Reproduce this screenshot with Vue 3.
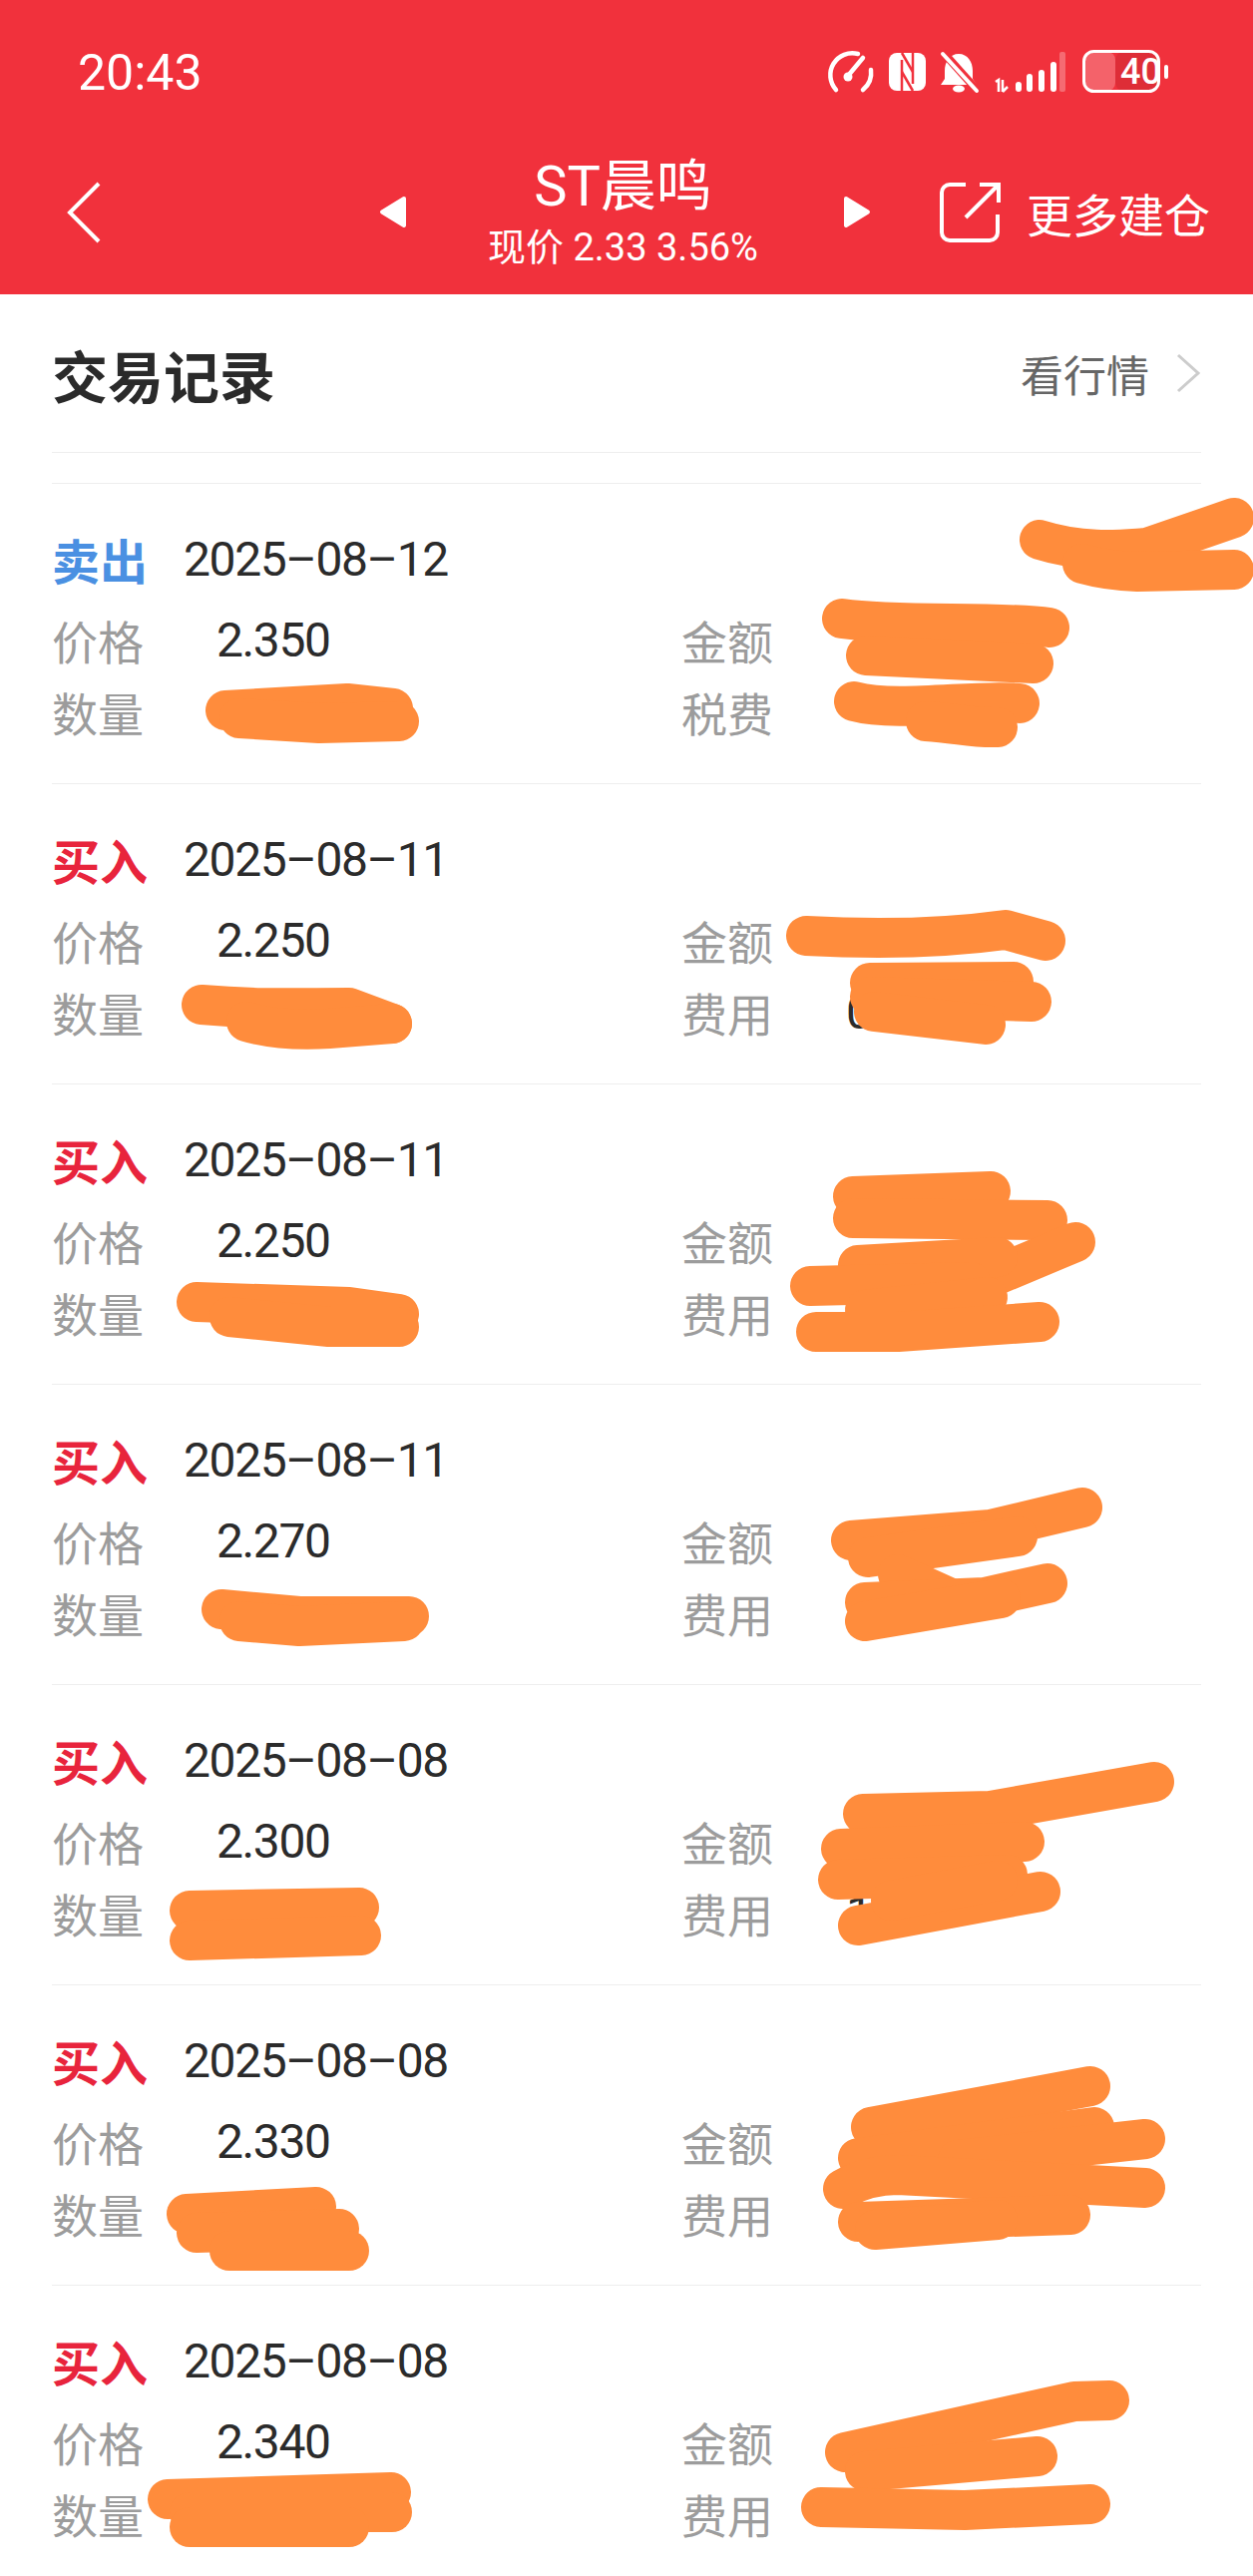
<script setup>
const rows = [
  { side: "sell", tag: "卖出", date: "2025–08–12", price: "2.350", feeLabel: "税费", fee: "" },
  { side: "buy", tag: "买入", date: "2025–08–11", price: "2.250", feeLabel: "费用", fee: "0" },
  { side: "buy", tag: "买入", date: "2025–08–11", price: "2.250", feeLabel: "费用", fee: "1" },
  { side: "buy", tag: "买入", date: "2025–08–11", price: "2.270", feeLabel: "费用", fee: "" },
  { side: "buy", tag: "买入", date: "2025–08–08", price: "2.300", feeLabel: "费用", fee: "1" },
  { side: "buy", tag: "买入", date: "2025–08–08", price: "2.330", feeLabel: "费用", fee: "" },
  { side: "buy", tag: "买入", date: "2025–08–08", price: "2.340", feeLabel: "费用", fee: "" },
];

// hand-drawn orange marker strokes, page coordinates
const scribbles = [
  "M1042 541C1090 556 1130 550 1150 549L1237 519",
  "M1085 565Q1110 572 1140 573L1237 571",
  "M844 620C900 628 1000 622 1052 629",
  "M868 657L1036 665",
  "M856 703C900 715 980 700 1022 705",
  "M928 723C960 725 975 730 1000 729",
  "M202 1007C260 1012 300 1010 350 1010L393 1026",
  "M247 1024Q280 1034 330 1031L393 1026",
  "M226 712L348 705L394 710",
  "M240 720L320 725L400 723",
  "M808 938C880 942 950 940 1008 932L1048 943",
  "M872 985L1016 984",
  "M872 999L1034 1004",
  "M876 1014L988 1027",
  "M855 1199L993 1194",
  "M855 1221L1050 1223",
  "M1078 1245L973 1289",
  "M860 1268L1000 1260",
  "M812 1289L973 1285",
  "M867 1313L990 1300",
  "M818 1335L900 1335L1042 1325",
  "M197 1305L350 1310L400 1317",
  "M230 1320L330 1330L400 1330",
  "M853 1544L993 1533L1085 1511",
  "M870 1561L1020 1540",
  "M900 1578L953 1602",
  "M867 1606L987 1601L1050 1587",
  "M867 1625L1003 1602",
  "M222 1613L300 1620L410 1620",
  "M240 1625L300 1630L405 1625",
  "M865 1818L993 1815L1157 1786",
  "M843 1853L1027 1846",
  "M840 1884L1010 1879",
  "M860 1930L1043 1896",
  "M893 1905L1000 1885",
  "M190 1915L360 1912",
  "M190 1945L362 1940",
  "M873 2132L1093 2091",
  "M860 2163L1097 2132",
  "M960 2165L1148 2144",
  "M845 2194Q870 2180 900 2180L1148 2193",
  "M860 2227L1073 2220",
  "M877 2235L1000 2225",
  "M187 2219L317 2212",
  "M197 2238L340 2234",
  "M230 2256L350 2256",
  "M847 2458L1077 2407L1112 2406",
  "M867 2477L1040 2462",
  "M823 2513L967 2516L1093 2510",
  "M168 2505L392 2498",
  "M190 2518L393 2518",
  "M190 2533L350 2533",
];
</script>

<template>
  <div class="page">
    <header class="top">
      <div class="status">
        <span class="time">20:43</span>
        <svg class="status-icons" width="350" height="50" viewBox="825 48 350 50">
          <g fill="none" stroke="#fff" stroke-width="4.5" stroke-linecap="round">
            <path d="M838 90A22 22 0 0 1 860 54" />
            <path d="M873 70A22 22 0 0 1 865 90" />
            <path d="M850 76L865 58" />
          </g>
          <circle cx="850" cy="77" r="4.5" fill="#fff" />

          <rect x="891" y="53" width="37" height="38" rx="8" fill="#fff" />
          <g fill="none" stroke="#f1313c" stroke-width="2.5">
            <path d="M904 60V91" />
            <path d="M915 53V84" />
            <path d="M904 53L915 72" />
            <path d="M904 72L915 91" />
          </g>

          <path d="M961 54c-9 0-14 8-14 17v8l-4 6h36l-4-6v-8c0-9-5-17-14-17z" fill="#fff" />
          <ellipse cx="961" cy="89" rx="6" ry="3.5" fill="#fff" />
          <path d="M945 52L979 90" stroke="#f1313c" stroke-width="8" />
          <path d="M945 54L979 91" stroke="#fff" stroke-width="4" stroke-linecap="round" />

          <g fill="none" stroke="#fff" stroke-width="2.5">
            <path d="M998 82L1001 80V92" />
            <path d="M1005 80V92M1005 92L1010 87" />
          </g>
          <rect x="1018" y="82" width="6" height="10" rx="3" fill="#fff" />
          <rect x="1029" y="74" width="6" height="18" rx="3" fill="#fff" />
          <rect x="1041" y="70" width="6" height="22" rx="3" fill="#fff" />
          <rect x="1053" y="62" width="6" height="30" rx="3" fill="#fff" />
          <rect x="1062" y="52" width="6" height="40" rx="2" fill="#fff" opacity="0.28" />

          <rect x="1087" y="52" width="31" height="39" rx="8" fill="#fff" opacity="0.24" />
          <rect x="1118" y="52" width="43" height="39" rx="8" fill="#000" opacity="0.08" />
          <rect x="1086.5" y="51.5" width="75" height="40" rx="10" fill="none" stroke="#fff" stroke-width="3" />
          <text x="1123" y="84" class="batt">40</text>
          <rect x="1167" y="65" width="4" height="14" rx="2" fill="#fff" />
        </svg>
      </div>

      <div class="nav">
        <svg class="back" width="36" height="64" viewBox="66 181 36 64">
          <path d="M99 184L70 213L99 242" fill="none" stroke="#fff" stroke-width="4" />
        </svg>
        <svg class="arrow prev" width="27" height="33" viewBox="0 0 27 33">
          <path d="M25 3L3 16.500L25 30Z" fill="#fff" stroke="#fff" stroke-width="4" stroke-linejoin="round" />
        </svg>
        <div class="stock">
          <div class="stock-name">ST晨鸣</div>
          <div class="stock-sub">现价 2.33 3.56%</div>
        </div>
        <svg class="arrow" width="27" height="33" viewBox="0 0 27 33">
          <path d="M2 3L24 16.500L2 30Z" fill="#fff" stroke="#fff" stroke-width="4" stroke-linejoin="round" />
        </svg>
        <svg class="share" width="62" height="62" viewBox="941 182 62 62" fill="none" stroke="#fff" stroke-width="4">
          <path d="M968 185H952a8 8 0 0 0-8 8V233a8 8 0 0 0 8 8H992a8 8 0 0 0 8-8V215" />
          <path d="M968 218L1000 186" />
          <path d="M982 185H1001V203" />
        </svg>
        <span class="more">更多建仓</span>
      </div>
    </header>

    <section class="title-row">
      <h2>交易记录</h2>
      <div class="quote">
        <span>看行情</span>
        <svg width="26" height="40" viewBox="0 0 26 40">
          <path d="M3 2L23 20L3 38" fill="none" stroke="#ccc" stroke-width="3" />
        </svg>
      </div>
    </section>

    <ul class="list">
      <li v-for="(row, i) in rows" :key="i" class="row">
        <div class="row-head">
          <span class="tag" :class="row.side">{{ row.tag }}</span>
          <span class="date">{{ row.date }}</span>
        </div>
        <div class="fields">
          <div class="field"><label>价格</label><b>{{ row.price }}</b></div>
          <div class="field"><label>金额</label><b></b></div>
          <div class="field"><label>数量</label><b></b></div>
          <div class="field"><label>{{ row.feeLabel }}</label><b>{{ row.fee }}</b></div>
        </div>
      </li>
    </ul>

    <svg class="marker" width="1256" height="2582" viewBox="0 0 1256 2582">
      <path v-for="(d, i) in scribbles" :key="i" :d="d" />
    </svg>
  </div>
</template>

<style>
body {
  margin: 0;
  background: #fff;
}
</style>

<style scoped>
.page {
  position: relative;
  width: 1256px;
  height: 2582px;
  overflow: hidden;
  background: #fff;
  font-family: Roboto, "Noto Sans CJK SC", sans-serif;
}

.top {
  height: 295px;
  background: #f1313c;
  color: #fff;
}

.status {
  height: 130px;
  display: flex;
  align-items: flex-start;
  padding-top: 48px;
  box-sizing: border-box;
}

.time {
  margin-left: 78px;
  font-size: 50px;
  line-height: 50px;
}

.status-icons {
  display: block;
  margin-left: auto;
  margin-right: 81px;
}

.batt {
  fill: #fff;
  font-size: 36px;
  font-weight: 500;
  font-family: Roboto, sans-serif;
}

.nav {
  height: 165px;
  display: flex;
  align-items: center;
}

.back {
  margin-left: 66px;
}

.prev {
  margin-left: 278px;
}

.stock {
  width: 439px;
  padding-right: 4px;
  box-sizing: border-box;
  text-align: center;
}

.stock-name {
  font-size: 56px;
  line-height: 64px;
}

.stock-sub {
  font-size: 38px;
  line-height: 44px;
  margin-top: 7px;
}

.share {
  margin-left: 68px;
}

.more {
  margin-left: 26px;
  font-size: 46px;
  white-space: nowrap;
}

.title-row {
  height: 159px;
  margin: 0 52px;
  border-bottom: 1px solid #eee;
  display: flex;
  align-items: center;
  justify-content: space-between;
  box-sizing: border-box;
}

h2 {
  margin: 0;
  font-size: 56px;
  font-weight: 700;
  color: #2a2a2a;
}

.quote {
  display: flex;
  align-items: center;
  gap: 26px;
  font-size: 43px;
  color: #666;
}

.list {
  list-style: none;
  margin: 30px 52px 0;
  padding: 0;
  border-top: 1px solid #eee;
}

.row {
  height: 301px;
  box-sizing: border-box;
  padding-top: 50px;
  border-bottom: 1px solid #eee;
}

.row-head {
  display: flex;
  align-items: center;
  height: 50px;
  margin-bottom: 20px;
}

.tag {
  width: 132px;
  font-size: 48px;
  font-weight: 700;
}

.tag.buy {
  color: #e8243c;
}

.tag.sell {
  color: #4a90e2;
}

.date {
  font-size: 48px;
  letter-spacing: -1.4px;
  color: #2b2b2b;
}

.fields {
  display: grid;
  grid-template-columns: 631px 1fr;
  grid-auto-rows: 72px;
}

.field {
  display: flex;
  align-items: center;
}

.field label {
  width: 165px;
  font-size: 46px;
  color: #9c9c9c;
}

.field b {
  font-size: 48px;
  font-weight: 400;
  letter-spacing: -1.4px;
  color: #2b2b2b;
}

.marker {
  position: absolute;
  top: 0;
  left: 0;
  pointer-events: none;
}

.marker path {
  fill: none;
  stroke: #ff8c3c;
  stroke-width: 40;
  stroke-linecap: round;
  stroke-linejoin: round;
}
</style>
